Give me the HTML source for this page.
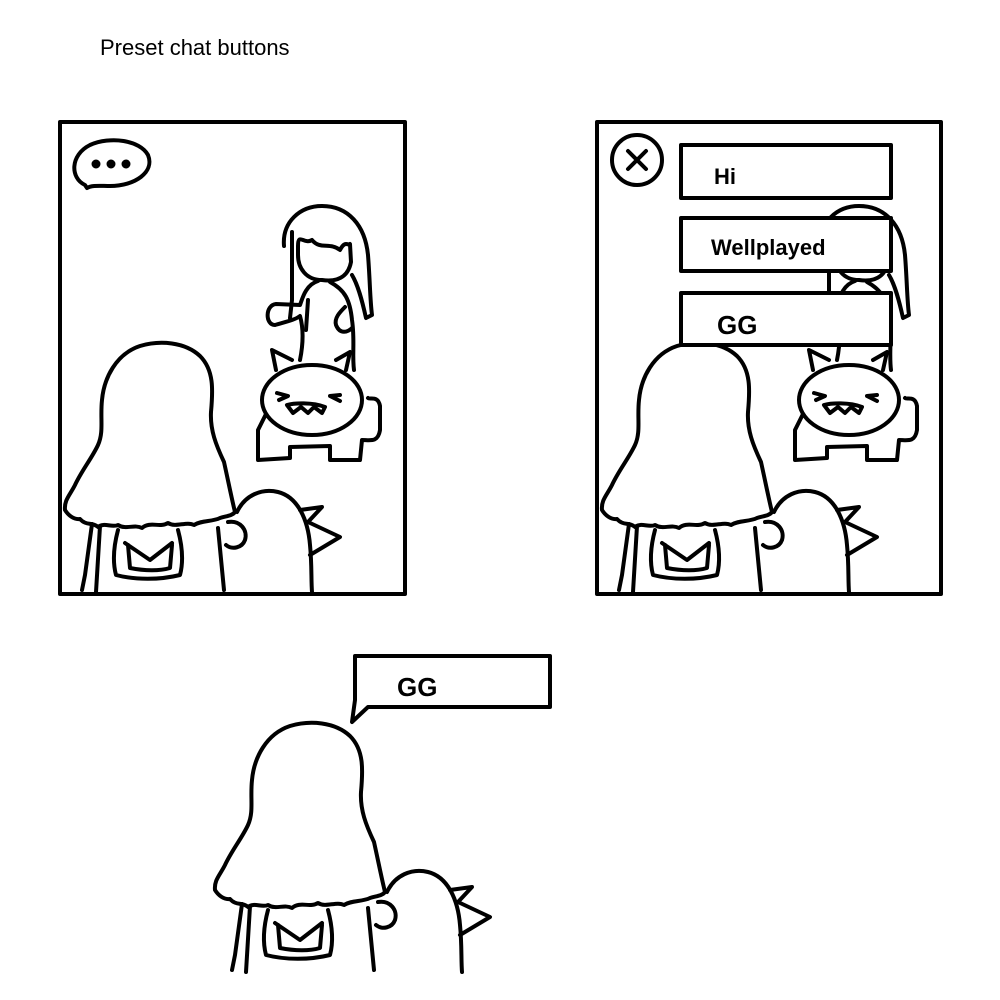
<!DOCTYPE html>
<html><head><style>
html,body{margin:0;padding:0;background:#fff;width:1000px;height:1000px;overflow:hidden}
svg{display:block}
text{font-family:"Liberation Sans",sans-serif;font-weight:bold;fill:#000}
</style></head><body>
<svg width="1000" height="1000" viewBox="0 0 1000 1000" fill="none" stroke="#000" stroke-width="4" stroke-linecap="round" stroke-linejoin="round">
<defs>
<g id="player">
  <path d="M237,512 C245,495 262,488 278,492 C298,497 308,520 310,545 C312,565 311,580 312,592" fill="#fff"/>
  <path d="M300,510 L322,507 L308,522 L340,537 L310,555"/>
  <path d="M235,512 C232,500 228,480 224,462 C216,445 210,430 211,412 C213,390 214,370 200,356 C185,342 160,340 140,346 C116,354 104,378 102,400 C100,418 104,432 98,445 C92,458 82,470 75,485 C70,495 64,500 65,510 C68,515 74,520 80,519 C86,526 93,522 98,527 C104,522 112,528 118,525 C126,530 134,524 142,528 C150,521 160,528 168,523 C176,528 186,521 194,525 C202,520 212,522 220,518 C226,516 232,516 235,512 Z" fill="#fff"/>
  <path d="M92,524 L85,575 L82,590"/>
  <path d="M100,526 L96,592"/>
  <path d="M218,528 L224,590"/>
  <path d="M118,530 C114,545 112,560 116,575 C135,580 160,580 180,575 C184,560 182,545 178,530"/>
  <path d="M125,543 L150,560 L172,543"/>
  <path d="M128,545 L130,568 C145,571 160,571 170,568 L172,545"/>
  <path d="M228,522 C240,520 248,530 245,540 C242,548 232,550 226,545" fill="#fff"/>
</g>
<g id="npc">
  <path d="M284,246 C282,222 300,206 322,206 C348,206 365,225 368,255 C370,280 370,300 372,315 L366,318 C362,300 358,285 352,275"/>
  <path d="M292,232 L292,300 L290,318"/>
  <path d="M298,246 C298,232 304,245 312,240 C320,250 330,242 340,250 C345,240 348,246 350,244 L351,262 C348,278 336,282 322,280 C306,280 298,268 298,255 Z" fill="#fff"/>
  <path d="M318,281 C305,285 302,300 300,305 L276,304 C265,305 265,325 275,325 C285,322 295,320 300,316 C304,330 303,345 300,360"/>
  <path d="M330,282 C345,290 350,300 352,320 C355,340 352,355 354,370"/>
  <path d="M345,307 C340,312 334,318 336,325 C340,335 348,332 352,328"/>
  <path d="M308,300 L306,330"/>
  <path d="M268,410 L258,430 L258,460 L290,458 L290,447 L330,446 L330,460 L360,460 L362,440 C370,440 378,443 380,430 L380,406 C378,395 370,400 368,398" fill="#fff"/>
  <path d="M276,370 L272,350 L292,360 M336,360 L350,352 L346,370"/>
  <ellipse cx="312" cy="400" rx="50" ry="35" fill="#fff"/>
  <path d="M277,393 L288,396 L279,400 M340,395 L330,396 L340,401"/>
  <path d="M287,405 C294,403 312,402 325,407 L322,413 L314,407 L308,413 L301,407 L293,413 Z"/>
</g>
</defs>

<text x="100" y="55" font-size="22" stroke="none" style="font-weight:normal">Preset chat buttons</text>

<rect x="60" y="122" width="345" height="472" fill="#fff"/>
<use href="#npc"/>
<use href="#player"/>
<path d="M85,185 C70,178 70,155 90,145 C110,136 140,140 148,155 C155,172 135,186 110,186 C100,186 92,185 87,188 Z" fill="#fff"/>
<circle cx="96" cy="164" r="2.5" fill="#000"/><circle cx="111" cy="164" r="2.5" fill="#000"/><circle cx="126" cy="164" r="2.5" fill="#000"/>

<rect x="597" y="122" width="344" height="472" fill="#fff"/>
<g transform="translate(537,0)"><use href="#npc"/><use href="#player"/></g>
<rect x="681" y="145" width="210" height="53" fill="#fff"/>
<rect x="681" y="218" width="210" height="53" fill="#fff"/>
<rect x="681" y="293" width="210" height="52" fill="#fff"/>
<circle cx="637" cy="160" r="25" fill="#fff"/>
<path d="M628,151 L646,169 M646,151 L628,169"/>
<text x="714" y="184" font-size="22" stroke="none">Hi</text>
<text x="711" y="255" font-size="22" stroke="none">Wellplayed</text>
<text x="717" y="334" font-size="26" stroke="none">GG</text>

<g transform="translate(150,380)"><use href="#player"/></g>
<path d="M355,656 L550,656 L550,707 L368,707 L352,722 L355,700 Z" fill="#fff"/>
<text x="397" y="696" font-size="26" stroke="none">GG</text>
</svg>
</body></html>
